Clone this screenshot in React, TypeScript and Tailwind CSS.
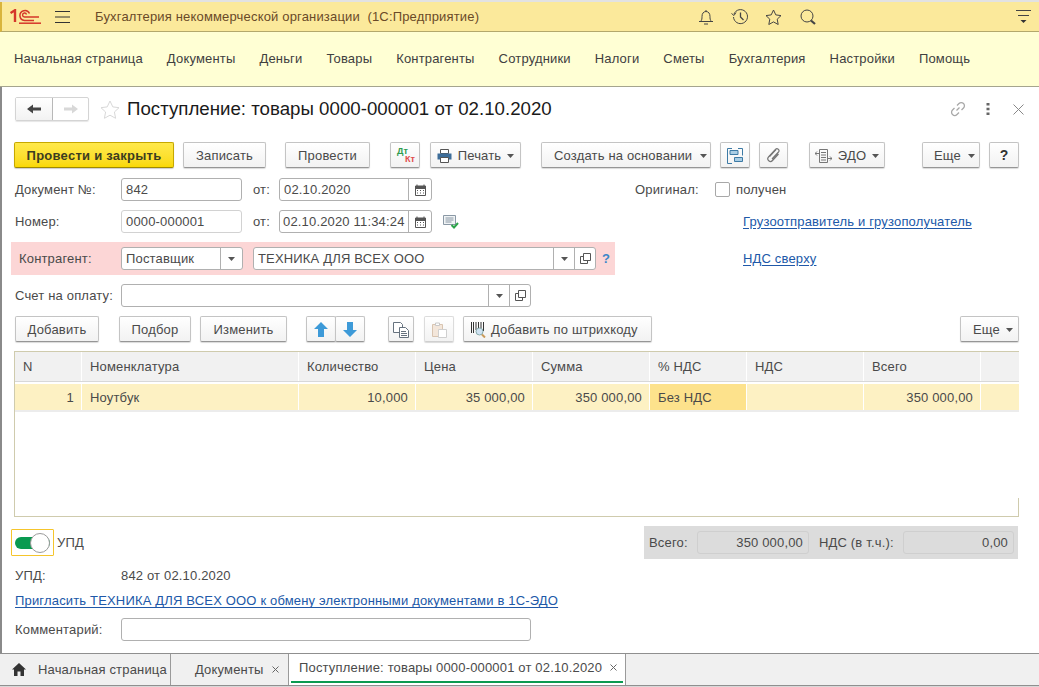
import React from "react";

const Caret = () => (
  <svg width="7" height="4" viewBox="0 0 7 4" className="shrink-0"><path d="M0 0h7L3.500 4z" fill="#555" /></svg>
);

function Btn({ className = "", children }: { className?: string; children?: React.ReactNode }) {
  return (
    <div className={"flex h-[26px] shrink-0 items-center justify-center rounded-[2px] border border-[#c4c4c4] border-b-[#969696] bg-gradient-to-b from-white to-[#f2f2f2] pt-px shadow-[0_1px_1px_rgba(0,0,0,0.15)] " + className}>
      {children}
    </div>
  );
}

const Calendar = () => (
  <svg width="11" height="12" viewBox="0 0 11 12">
    <path d="M0.500 2h10v9.500h-10z" fill="#fff" stroke="#555" />
    <path d="M0.500 2h10v3h-10z" fill="#555" />
    <path d="M2 0.500v2M9 0.500v2" stroke="#555" />
    <path d="M2 6.500h1M5 6.500h1M8 6.500h1M2 9h1M5 9h1M8 9h1" stroke="#555" />
  </svg>
);

const OpenIcon = () => (
  <svg width="11" height="11" viewBox="0 0 11 11" fill="none" stroke="#555">
    <path d="M3.500 7.500v-7h7v7z" />
    <path d="M3.500 3.500h-3v7h7v-3" />
  </svg>
);

function Field({ className = "", children, dim = false }: { className?: string; children?: React.ReactNode; dim?: boolean }) {
  return (
    <div className={"flex h-[23px] shrink-0 items-center overflow-hidden rounded-[3px] border bg-white " + (dim ? "border-[#d2d2d2] " : "border-[#b0b0b0] ") + className}>
      {children}
    </div>
  );
}

const Cell = ({ className = "", children }: { className?: string; children?: React.ReactNode }) => (
  <div className={"flex h-full shrink-0 items-center justify-center border-l border-[#b0b0b0] " + className}>{children}</div>
);

const L = ({ className = "", children }: { className?: string; children: React.ReactNode }) => (
  <div className={"shrink-0 whitespace-nowrap " + className}>{children}</div>
);

const cols: { t: string; w: string; v: string; right: boolean; bg: string }[] = [
  { t: "N", w: "w-[66px]", v: "1", right: true, bg: "bg-[#fdf1c3]" },
  { t: "Номенклатура", w: "w-[216px]", v: "Ноутбук", right: false, bg: "bg-[#fdf1c3]" },
  { t: "Количество", w: "w-[116px]", v: "10,000", right: true, bg: "bg-[#fdf1c3]" },
  { t: "Цена", w: "w-[116px]", v: "35 000,00", right: true, bg: "bg-[#fdf1c3]" },
  { t: "Сумма", w: "w-[116px]", v: "350 000,00", right: true, bg: "bg-[#fdf1c3]" },
  { t: "% НДС", w: "w-[96px]", v: "Без НДС", right: false, bg: "bg-[#fde28c]" },
  { t: "НДС", w: "w-[116px]", v: "", right: false, bg: "bg-[#fdf1c3]" },
  { t: "Всего", w: "w-[116px]", v: "350 000,00", right: true, bg: "bg-[#fdf1c3]" },
  { t: "", w: "flex-1", v: "", right: false, bg: "bg-[#fdf1c3]" },
];

const menu = ["Начальная страница", "Документы", "Деньги", "Товары", "Контрагенты", "Сотрудники", "Налоги", "Сметы", "Бухгалтерия", "Настройки", "Помощь"];

export default function App() {
  return (
    <div className="flex h-[687px] w-[1039px] flex-col overflow-hidden bg-white font-['Liberation_Sans',Arial,sans-serif] text-[13px] tracking-[0.17px] text-[#4a4a4a]">
      <div className="h-[2px] shrink-0 bg-[#e2e2e2]" />
      {/* Header */}
      <div className="flex h-[30px] shrink-0 items-center border-b border-l-2 border-b-[#b3a86c] border-l-[#d9b43c] bg-[#fbe99b]">
        <svg width="31" height="15" viewBox="0 0 31 15" className="ml-[8px] shrink-0" fill="none" stroke="#d5362a">
          <path d="M0.500 4 L5 1.200 V13" strokeWidth="2.400" />
          <path d="M24 11.500 H14.500 A5 5 0 1 1 19.500 4.500" strokeWidth="1.500" />
          <path d="M29 8 H14.500 A2 2 0 1 1 16.500 5.500" strokeWidth="1.400" />
          <path d="M9 14.200 H31" strokeWidth="1.500" />
        </svg>
        <svg width="15" height="12" viewBox="0 0 15 12" className="ml-[14px] shrink-0" stroke="#333"><path d="M0 .500h15M0 6h15M0 11.500h15" /></svg>
        <L className="ml-[25px] w-[603px] text-[#6a4a28]">Бухгалтерия некоммерческой организации&nbsp;&nbsp;(1С:Предприятие)</L>
        <svg width="16" height="16" viewBox="0 0 16 16" fill="none" stroke="#444" className="shrink-0">
          <path d="M2.500 12.500c1.500-1.500 1.500-3 1.500-5C4 4.500 5.500 2.500 8 2.500s4 2 4 5c0 2 0 3.500 1.500 5z" />
          <path d="M8 1v1.500M1 12.500h14M6 15h4" />
        </svg>
        <svg width="18" height="16" viewBox="0 0 18 16" fill="none" stroke="#444" className="ml-[17px] shrink-0">
          <path d="M3 5a7 7 0 1 1-.5 3" />
          <path d="M0.500 4.500L3 6.500L5 3.500" />
          <path d="M9.500 3.500V8l3 3" strokeWidth="1.300" />
        </svg>
        <svg width="17" height="16" viewBox="0 0 17 16" fill="none" stroke="#444" className="ml-[16px] shrink-0">
          <path d="M8.500 1l2.300 4.900 5.200.7-3.800 3.600 1 5.300-4.700-2.600-4.700 2.600 1-5.300L1 6.600l5.200-.7z" />
        </svg>
        <svg width="17" height="16" viewBox="0 0 17 16" fill="none" stroke="#444" className="ml-[18px] shrink-0">
          <circle cx="7" cy="7" r="6" />
          <path d="M11 11.500l4 3.500" strokeWidth="2.200" />
        </svg>
        <svg width="15" height="14" viewBox="0 0 15 14" className="ml-[199px] shrink-0" stroke="#444">
          <path d="M0 .500h15M2 5.500h11" />
          <path d="M4.500 10h6L7.500 13z" fill="#333" stroke="none" />
        </svg>
      </div>
      {/* Menu */}
      <div className="flex h-[55px] shrink-0 items-center gap-[24px] border-b border-[#a5a58e] bg-[#ffffd4] pl-[14px] text-[#404040]">
        {menu.map((m) => (
          <L key={m}>{m}</L>
        ))}
      </div>

      {/* Form */}
      <div className="flex min-h-0 flex-1 flex-col border-l-2 border-[#8a8a8a]">
        {/* Title row */}
        <div className="mt-[10px] flex h-[24px] shrink-0 items-center pl-[13px]">
          <div className="flex h-[24px] w-[74px] shrink-0 rounded-[2px] border border-[#d4d4d4] shadow-[0_1px_1px_rgba(0,0,0,0.1)]">
            <div className="flex w-[37px] items-center justify-center border-r border-[#b8b8b8] bg-gradient-to-b from-white to-[#f2f2f2]">
              <svg width="14" height="10" viewBox="0 0 14 10" fill="#444"><path d="M0 5L6 .500V3.500h8v3H6v3z" /></svg>
            </div>
            <div className="flex flex-1 items-center justify-center">
              <svg width="14" height="10" viewBox="0 0 14 10" fill="#d8d8d8"><path d="M14 5L8 .500V3.500H0v3h8v3z" /></svg>
            </div>
          </div>
          <svg width="20" height="19" viewBox="0 0 20 19" fill="none" stroke="#d8d8d8" className="ml-[11px] shrink-0">
            <path d="M10 1l2.800 5.900 6.200.8-4.600 4.300 1.200 6.300L10 15.200l-5.600 3.100 1.200-6.300L1 7.700l6.200-.8z" />
          </svg>
          <div className="ml-[7px] w-[823px] shrink-0 whitespace-nowrap text-[18.7px] tracking-normal text-[#1a1a1a]">Поступление: товары 0000-000001 от 02.10.2020</div>
          <svg width="16" height="16" viewBox="0 0 16 16" fill="none" stroke="#a8a8a8" strokeWidth="1.300" className="shrink-0">
            <path d="M6.500 9.500l3-3M7 4.500l2-2a3 3 0 0 1 4.500 4.500l-2 2M9 11.500l-2 2A3 3 0 0 1 2.500 9l2-2" />
          </svg>
          <svg width="4" height="12" viewBox="0 0 4 12" fill="#666" className="ml-[20px] shrink-0"><path d="M.500 0h3v2.500h-3zM.500 4.700h3v2.500h-3zM.500 9.400h3v2.500h-3z" /></svg>
          <svg width="11" height="11" viewBox="0 0 11 11" stroke="#888" className="ml-[23px] shrink-0"><path d="M.500.500l10 10M10.500.500l-10 10" /></svg>
        </div>

        {/* Toolbar */}
        <div className="mt-[21px] flex h-[26px] shrink-0 items-center pl-[12px]">
          <div className="flex h-[26px] w-[160px] shrink-0 items-center justify-center rounded-[2px] border border-[#c6a800] border-b-[#a08a00] bg-gradient-to-b from-[#ffe94a] to-[#fad900] pt-px font-bold tracking-[0.25px] text-[#3c3c20] shadow-[0_1px_1px_rgba(0,0,0,0.2)]">Провести и закрыть</div>
          <Btn className="ml-[9px] w-[83px]">Записать</Btn>
          <Btn className="ml-[19px] w-[85px]">Провести</Btn>
          <Btn className="ml-[20px] w-[30px]">
            <div className="relative h-[18px] w-[20px] text-[9px] font-bold leading-[9px] tracking-normal">
              <span className="absolute left-[2px] top-0 text-[#2e9b4f]">Дт</span>
              <span className="absolute right-0 top-[8px] text-[#e04b4b]">Кт</span>
            </div>
          </Btn>
          <Btn className="ml-[10px] w-[91px] gap-[6px]">
            <svg width="15" height="14" viewBox="0 0 15 14" className="shrink-0">
              <path d="M3.500.500h8v4h-8z" fill="#fff" stroke="#555" />
              <path d="M.500 4.500h14v6h-14z" fill="#3d6d99" />
              <path d="M3.500 8.500h8v5h-8z" fill="#fff" stroke="#555" />
            </svg>
            <span>Печать</span>
            <Caret />
          </Btn>
          <Btn className="ml-[20px] w-[170px] justify-start gap-[8px] pl-[12px]"><span>Создать на основании</span><Caret /></Btn>
          <Btn className="ml-[9px] w-[30px]">
            <svg width="16" height="16" viewBox="0 0 16 16" fill="none" stroke="#3d7aa5">
              <path d="M5 .500H.500v15H5" />
              <path d="M3 2.500h8v4H3z" fill="#a9cde4" />
              <path d="M7.500 9.500h8v4h-8z" fill="#a9cde4" />
              <path d="M11 .500h4.500v7" />
            </svg>
          </Btn>
          <Btn className="ml-[9px] w-[29px]">
            <svg width="15" height="15" viewBox="0 0 15 15" fill="none" stroke="#777" strokeWidth="1.200">
              <path d="M12.500 6L6.500 12.500a2.500 2.500 0 0 1-4-3.500l7-7.500a1.700 1.700 0 0 1 3 2.500L6 11" />
              <path d="M10 1.500L3.500 8.500" />
            </svg>
          </Btn>
          <Btn className="ml-[21px] w-[76px] gap-[6px]">
            <svg width="17" height="14" viewBox="0 0 17 14" fill="none" stroke="#777" className="shrink-0">
              <path d="M4.500.500h8v13h-8zM6 3.500h5M6 6h5M6 8.500h5M6 11h5" />
              <path d="M0 4.500h4M2 2.500l-2 2 2 2M13 9.500h4M15 7.500l2 2-2 2" />
            </svg>
            <span>ЭДО</span>
            <Caret />
          </Btn>
          <Btn className="ml-[37px] w-[58px] justify-start gap-[7px] pl-[11px]"><span>Еще</span><Caret /></Btn>
          <Btn className="ml-[9px] w-[30px] text-[14px] font-bold text-[#333]">?</Btn>
        </div>

        {/* Row 1 */}
        <div className="mt-[10px] flex h-[23px] shrink-0 items-center pl-[13px]">
          <L className="w-[106px]">Документ №:</L>
          <Field className="w-[121px] pl-[4px]">842</Field>
          <L className="w-[37px] pl-[11px]">от:</L>
          <Field className="w-[153px]">
            <div className="flex-1 pl-[4px]">02.10.2020</div>
            <Cell className="w-[23px]"><Calendar /></Cell>
          </Field>
          <L className="ml-[203px] w-[80px]">Оригинал:</L>
          <div className="h-[15px] w-[15px] shrink-0 rounded-[2px] border border-[#a8a8a8] bg-white" />
          <L className="ml-[6px]">получен</L>
        </div>
        {/* Row 2 */}
        <div className="mt-[9px] flex h-[23px] shrink-0 items-center pl-[13px]">
          <L className="w-[106px]">Номер:</L>
          <Field className="w-[121px] pl-[4px]" dim>0000-000001</Field>
          <L className="w-[37px] pl-[11px]">от:</L>
          <Field className="w-[153px]">
            <div className="flex-1 whitespace-nowrap pl-[3px]">02.10.2020 11:34:24</div>
            <Cell className="w-[23px]"><Calendar /></Cell>
          </Field>
          <svg width="16" height="14" viewBox="0 0 16 14" fill="none" className="ml-[11px] shrink-0">
            <path d="M.500.500h12v9h-12z" stroke="#8a98a5" fill="#f0f3f5" />
            <path d="M2.500 3h8M2.500 5h8M2.500 7h6" stroke="#8a98a5" />
            <path d="M8.500 10l2.500 2.500 4-4.500" stroke="#2da34a" strokeWidth="2" />
          </svg>
          <L className="ml-[284px] text-[#2058a8] underline underline-offset-2">Грузоотправитель и грузополучатель</L>
        </div>
        {/* Row 3 pink */}
        <div className="mt-[9px] flex h-[33px] shrink-0 items-center">
          <div className="ml-[9px] flex h-[33px] w-[604px] shrink-0 items-center bg-[#fcd6d6] pl-[8px]">
            <L className="w-[102px]">Контрагент:</L>
            <Field className="w-[122px]">
              <div className="flex-1 pl-[4px]">Поставщик</div>
              <Cell className="w-[22px]"><Caret /></Cell>
            </Field>
            <Field className="ml-[10px] w-[343px]">
              <div className="flex-1 whitespace-nowrap pl-[4px]">ТЕХНИКА ДЛЯ ВСЕХ ООО</div>
              <Cell className="w-[21px]"><Caret /></Cell>
              <Cell className="w-[21px]"><OpenIcon /></Cell>
            </Field>
            <L className="ml-[6px] font-bold text-[#3a86c8]">?</L>
          </div>
          <L className="ml-[128px] text-[#2058a8] underline underline-offset-2">НДС сверху</L>
        </div>
        {/* Row 4 */}
        <div className="mt-[9px] flex h-[23px] shrink-0 items-center pl-[13px]">
          <L className="w-[106px]">Счет на оплату:</L>
          <Field className="w-[410px]">
            <div className="flex-1" />
            <Cell className="w-[21px]"><Caret /></Cell>
            <Cell className="w-[21px]"><OpenIcon /></Cell>
          </Field>
        </div>
        {/* Toolbar 2 */}
        <div className="mt-[9px] flex h-[26px] shrink-0 items-center pl-[13px]">
          <Btn className="w-[84px]">Добавить</Btn>
          <Btn className="ml-[20px] w-[72px]">Подбор</Btn>
          <Btn className="ml-[9px] w-[87px]">Изменить</Btn>
          <Btn className="ml-[19px] w-[30px]">
            <svg width="14" height="15" viewBox="0 0 14 15" fill="#3d9ad8"><path d="M7 0l7 7H10v8H4V7H0z" /></svg>
          </Btn>
          <Btn className="-ml-px w-[30px]">
            <svg width="14" height="15" viewBox="0 0 14 15" fill="#3d9ad8"><path d="M7 15l7-7H10V0H4v8H0z" /></svg>
          </Btn>
          <Btn className="ml-[23px] w-[26px]">
            <svg width="16" height="16" viewBox="0 0 16 16" fill="#fff" stroke="#66727e">
              <path d="M.500.500h7l2 2v8h-9z" />
              <path d="M6.500 5.500h6l3 3v7h-9z" />
              <path d="M8 9.500h5M8 11.500h6M8 13.500h6" />
            </svg>
          </Btn>
          <Btn className="ml-[10px] w-[30px] border-[#dcdcdc] border-b-[#cfcfcf]">
            <svg width="15" height="16" viewBox="0 0 15 16" fill="none" stroke="#d8c4b0">
              <path d="M.500 2.500h10v12h-10z" fill="#f3e6da" />
              <path d="M3.500 1h4v2.500h-4z" fill="#fff" stroke="#c8c8c8" />
              <path d="M6.500 7.500h8v8h-8z" fill="#fff" stroke="#cfcfcf" />
            </svg>
          </Btn>
          <Btn className="ml-[9px] w-[189px] justify-start gap-[5px] pl-[7px]">
            <svg width="15" height="16" viewBox="0 0 15 16" fill="none" className="shrink-0">
              <path d="M.500 0v11M2.500 0v11M5 0v8M7.500 0v6M10 0v6M12.500 0v9" stroke="#333" />
              <circle cx="8.500" cy="9.500" r="3.500" fill="#cfe2f2" stroke="#8aa" />
              <path d="M11 12.500l3 3" stroke="#c99a5a" strokeWidth="2" />
            </svg>
            <span>Добавить по штрихкоду</span>
          </Btn>
          <Btn className="ml-[308px] w-[59px] justify-start gap-[6px] pl-[12px]"><span>Еще</span><Caret /></Btn>
        </div>

        {/* Table */}
        <div className="ml-[12px] mt-[9px] flex h-[166px] w-[1005px] shrink-0 flex-col border-b border-l border-t border-[#cfcbad]">
          <div className="flex h-[30px] shrink-0 gap-px border-b border-[#d8d8d8] bg-white">
            {cols.map((c, i) => (
              <div key={i} className={"flex items-center bg-[#f1f1f1] pl-[8px] " + c.w}>{c.t}</div>
            ))}
          </div>
          <div className="mt-[2px] flex h-[28px] shrink-0 gap-px border-b-2 border-[#ececec]">
            {cols.map((c, i) => (
              <div key={i} className={"flex items-center whitespace-nowrap pt-px " + c.w + " " + c.bg + (c.right ? " justify-end pr-[7px]" : " pl-[8px]")}>{c.v}</div>
            ))}
          </div>
          <div className="flex flex-1 justify-end">
            <div className="mt-[86px] w-px bg-[#cfcbad]" />
          </div>
        </div>

        {/* Toggle + totals */}
        <div className="mt-[9px] flex h-[33px] shrink-0 items-center">
          <div className="ml-[9px] flex h-[27px] w-[43px] shrink-0 items-center rounded-[1px] border border-[#f5c52c] pl-[3px]">
            <div className="relative h-[12px] w-[35px] rounded-full bg-[#0a9a50]">
              <div className="absolute -top-[4px] right-0 h-[20px] w-[20px] rounded-full border border-[#9a9a9a] bg-white" />
            </div>
          </div>
          <L className="ml-[3px] w-[30px]">УПД</L>
          <div className="ml-[557px] flex h-[33px] w-[374px] shrink-0 items-center bg-[#dcdcdc] pl-[5px]">
            <L className="w-[48px]">Всего:</L>
            <div className="flex h-[23px] w-[112px] shrink-0 items-center justify-end rounded-[3px] border border-[#cfcfcf] pr-[5px]">350 000,00</div>
            <L className="ml-[10px] w-[84px]">НДС (в т.ч.):</L>
            <div className="flex h-[23px] w-[111px] shrink-0 items-center justify-end rounded-[3px] border border-[#cfcfcf] pr-[5px]">0,00</div>
          </div>
        </div>

        <div className="mt-[8px] flex h-[18px] shrink-0 items-center pl-[13px]">
          <L className="w-[106px]">УПД:</L>
          <L>842 от 02.10.2020</L>
        </div>
        <div className="mt-[7px] flex h-[18px] shrink-0 items-center pl-[13px]">
          <L className="text-[#2058a8] underline underline-offset-2">Пригласить ТЕХНИКА ДЛЯ ВСЕХ ООО к обмену электронными документами в 1С-ЭДО</L>
        </div>
        <div className="mt-[8px] flex h-[23px] shrink-0 items-center pl-[13px]">
          <L className="w-[106px]">Комментарий:</L>
          <Field className="w-[410px]" />
        </div>
      </div>

      {/* Tabs */}
      <div className="flex h-[33px] shrink-0 border-y border-[#8f8f8f] bg-[#f0f0f0]">
        <div className="flex w-[171px] shrink-0 items-center border-r border-[#9a9a9a] pl-[12px]">
          <svg width="14" height="13" viewBox="0 0 14 13" fill="#333" className="shrink-0"><path d="M7 0l7 6.500h-2V13H8.500V8.500h-3V13H2V6.500H0z" /></svg>
          <L className="ml-[12px]">Начальная страница</L>
        </div>
        <div className="flex w-[118px] shrink-0 items-center border-r border-[#9a9a9a] pl-[24px]">
          <L>Документы</L>
          <svg width="7" height="7" viewBox="0 0 7 7" stroke="#666" className="ml-[8px] shrink-0"><path d="M.500.500l6 6M6.500.500l-6 6" /></svg>
        </div>
        <div className="flex w-[337px] shrink-0 flex-col border-r border-[#9a9a9a] bg-white pl-[2px] pr-[2px]">
          <div className="flex flex-1 items-center pl-[8px]">
            <L>Поступление: товары 0000-000001 от 02.10.2020</L>
            <svg width="7" height="7" viewBox="0 0 7 7" stroke="#666" className="ml-[8px] shrink-0"><path d="M.500.500l6 6M6.500.500l-6 6" /></svg>
          </div>
          <div className="mb-[2px] h-[2px] bg-[#0a9a50]" />
        </div>
      </div>
      <div className="h-[1px] shrink-0 bg-[#d8d8d8]" />
    </div>
  );
}
